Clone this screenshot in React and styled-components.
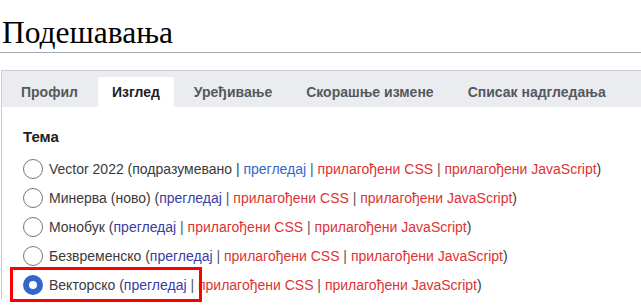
import React from "react";
import styled, { createGlobalStyle } from "styled-components";

const GlobalStyle = createGlobalStyle`
  body {
    margin: 0;
    background: #fff;
    font-family: "Liberation Sans", Arial, sans-serif;
    color: #202122;
  }
`;

const tabs = ["Профил", "Изглед", "Уређивање", "Скорашње измене", "Списак надгледања"];

const skins = [
  { name: "Vector 2022 (подразумевано", sep: " | ", fresh: true },
  { name: "Минерва (ново) (", sep: "" },
  { name: "Монобук (", sep: "" },
  { name: "Безвременско (", sep: "" },
  { name: "Векторско (", sep: "", checked: true },
];

const App = () => {
  return (
    <Page>
      <GlobalStyle />
      <Title>Подешавања</Title>
      <Panel>
        <TabBar>
          {tabs.map((t) => (
            <Tab key={t} active={t === "Изглед"}>
              {t}
            </Tab>
          ))}
        </TabBar>
        <Body>
          <Legend>Тема</Legend>
          {skins.map((s) => (
            <Row key={s.name}>
              <Radio checked={s.checked} />
              <Label>
                {s.name}
                {s.sep}
                <Link fresh={s.fresh}>прегледај</Link>
                <Pipe> | </Pipe>
                <RedLink>прилагођени CSS</RedLink>
                <Pipe> | </Pipe>
                <RedLink>прилагођени JavaScript</RedLink>)
              </Label>
              {s.checked && <Highlight />}
            </Row>
          ))}
        </Body>
      </Panel>
    </Page>
  );
};

const Page = styled.div`
  width: 641px;
  height: 307px;
  overflow: hidden;
`;

const Title = styled.h1`
  margin: 0;
  padding: 13px 0 0 2px;
  font-family: "Liberation Serif", "Times New Roman", serif;
  font-weight: normal;
  font-size: 31.5px;
  line-height: 39px;
  color: #000;
  border-bottom: 1px solid #a2a9b1;
`;

const Panel = styled.div`
  margin: 17px 0 0 1px;
  border-top: 1px solid #c8ccd1;
  border-left: 1px solid #c8ccd1;
`;

const TabBar = styled.div`
  display: flex;
  gap: 6px;
  height: 36px;
  padding: 0 0 0 5px;
  background: #eaecf0;
  align-items: flex-end;
`;

const Tab = styled.div`
  height: 30px;
  padding: 0 14px;
  display: flex;
  align-items: center;
  font-size: 14px;
  font-weight: bold;
  color: ${(p) => (p.active ? "#202122" : "#54595d")};
  background: ${(p) => (p.active ? "#fff" : "transparent")};
  border-radius: 2px 2px 0 0;
  white-space: nowrap;
`;

const Body = styled.div`
  padding: 20px 0 0 21px;
`;

const Legend = styled.div`
  font-size: 15px;
  font-weight: bold;
  line-height: 20px;
  margin-bottom: 7px;
`;

const Row = styled.div`
  position: relative;
  display: flex;
  align-items: center;
  gap: 6px;
  height: 29px;
`;

const Radio = styled.span`
  box-sizing: border-box;
  width: 20px;
  height: 20px;
  border-radius: 50%;
  background: #fff;
  border: ${(p) => (p.checked ? "6px solid #36c" : "1px solid #72777d")};
  flex-shrink: 0;
`;

const Label = styled.span`
  font-size: 14px;
  color: #3a3a3a;
  white-space: nowrap;
`;

const Link = styled.span`
  color: ${(p) => (p.fresh ? "#36c" : "#3b3ba5")};
`;

const RedLink = styled.span`
  color: #d33;
`;

const Pipe = styled.span`
  color: #54595d;
`;

const Highlight = styled.div`
  position: absolute;
  left: -13px;
  top: -3px;
  width: 192px;
  height: 35px;
  box-sizing: border-box;
  border: 3px solid #f00;
  pointer-events: none;
`;

export default App;
